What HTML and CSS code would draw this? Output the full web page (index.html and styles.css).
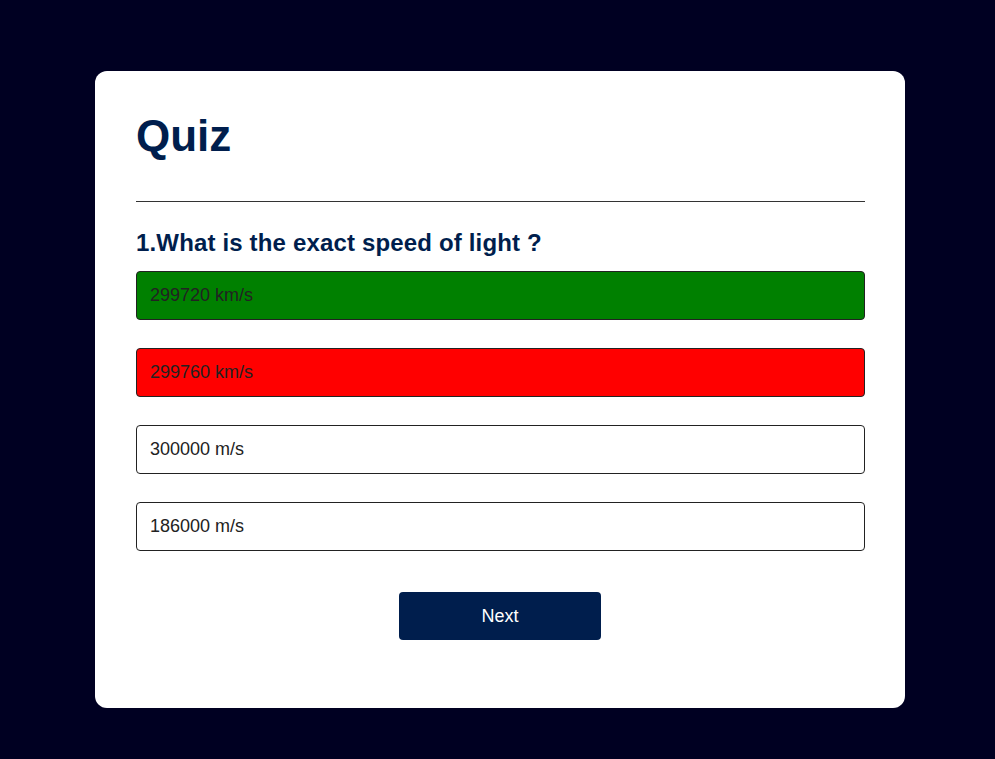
FILE: index.html
```html
<!DOCTYPE html>
<html lang="en">
<head>
<meta charset="utf-8">
<title>Quiz</title>
<link rel="stylesheet" href="styles.css">
</head>
<body>
<div class="app">
  <h1 class="title">Quiz</h1>
  <div class="quiz">
    <h2 class="question">1.What is the exact speed of light ?</h2>
    <div class="answers">
      <button class="btn correct">299720 km/s</button>
      <button class="btn incorrect">299760 km/s</button>
      <button class="btn">300000 m/s</button>
      <button class="btn">186000 m/s</button>
    </div>
    <button class="next-btn">Next</button>
  </div>
</div>
</body>
</html>
```
FILE: styles.css
```css
* {
  box-sizing: border-box;
}
html, body {
  margin: 0;
  padding: 0;
}
body {
  background: #000022;
  font-family: "Liberation Sans", Arial, sans-serif;
  min-height: 759px;
  padding-top: 71px;
}
.app {
  width: 810px;
  margin: 0 0 0 95px;
  background: #fff;
  border-radius: 12px;
  padding: 40px 40px 40px 41px;
}
.title {
  margin: 0;
  font-size: 44px;
  font-weight: 700;
  color: #001e4d;
  padding-bottom: 40px;
  border-bottom: 1px solid #333;
}
.question {
  margin: 27px 0 14px;
  font-size: 24px;
  font-weight: 700;
  letter-spacing: 0.16px;
  color: #001e4d;
}
.answers {
  display: flex;
  flex-direction: column;
  gap: 28px;
}
.btn {
  display: block;
  width: 100%;
  height: 49px;
  background: #fff;
  color: #222;
  font-family: "Liberation Sans", Arial, sans-serif;
  font-size: 18px;
  font-weight: 400;
  line-height: normal;
  text-align: left;
  vertical-align: top;
  border: 1px solid #222;
  border-radius: 4px;
  padding: 0 13px;
  margin: 0;
}
.btn.correct {
  background: #008000;
}
.btn.incorrect {
  background: #ff0000;
}
.next-btn {
  display: block;
  width: 202px;
  height: 48px;
  margin: 41px 0 28px 263px;
  background: #001e4d;
  color: #fff;
  font-family: "Liberation Sans", Arial, sans-serif;
  font-size: 18px;
  font-weight: 400;
  border: 0;
  border-radius: 4px;
  padding: 0;
}
```
